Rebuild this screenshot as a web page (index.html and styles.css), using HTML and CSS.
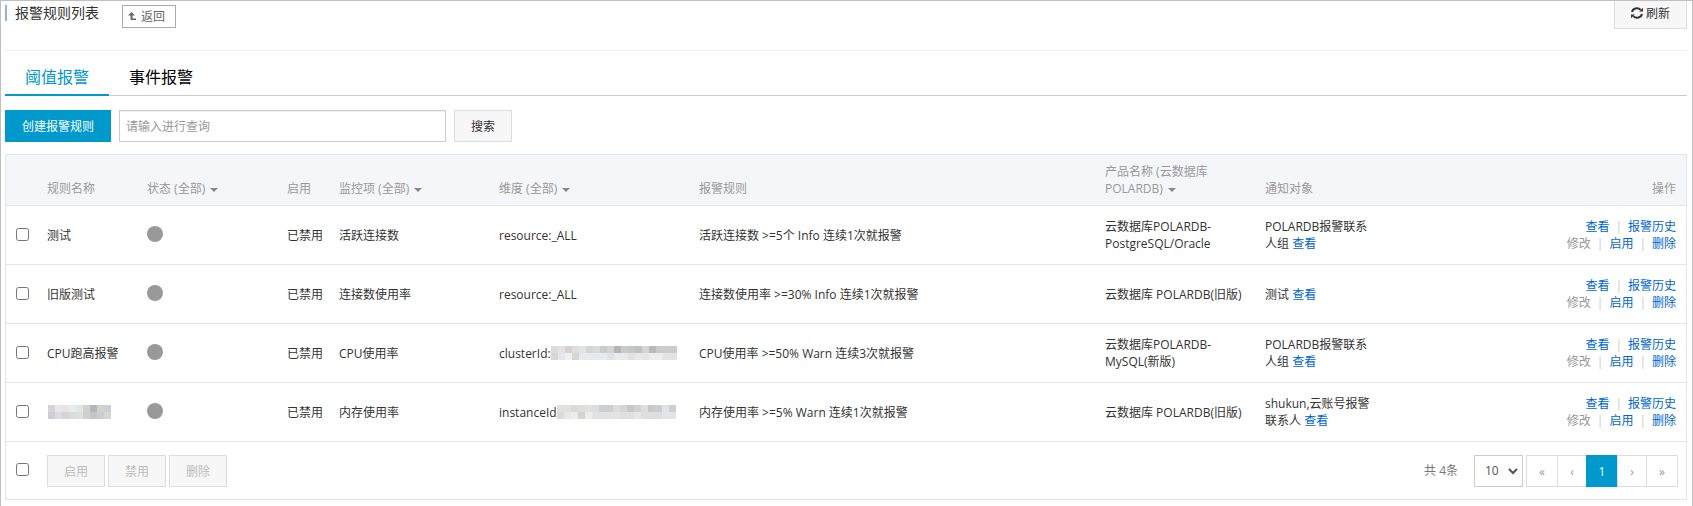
FILE: index.html
```
<!DOCTYPE html>
<html lang="zh-CN">
<head>
    <meta charset="UTF-8">
    <title>报警规则列表</title>
    <link rel="stylesheet" href="styles.css">
</head>
<body>
    <div class="page">
        <div class="header">
            <h1 class="title">报警规则列表</h1>
            <button type="button" class="btn-back">
                <svg width="8" height="8" viewBox="0 0 8 8"><path d="M3.5 0L7 3.6H4.6V6.6H8V8H2.6V3.6H0Z" fill="#666"/></svg>
                返回
            </button>
            <button type="button" class="btn-refresh">
                <svg width="12" height="12" viewBox="0 0 12 12" fill="none" stroke="#333" stroke-width="2">
                    <path d="M1 5A5 4.4 0 0 1 9.6 2.8M11 7A5 4.4 0 0 1 2.4 9.2"/>
                    <path d="M12 0.8V4.6H8.2ZM0 11.2V7.4H3.8Z" fill="#333" stroke="none"/>
                </svg>
                刷新
            </button>
        </div>

        <ul class="tabs">
            <li class="active"><a href="#">阈值报警</a></li>
            <li><a href="#">事件报警</a></li>
        </ul>

        <div class="toolbar">
            <button type="button" class="btn btn-primary">创建报警规则</button>
            <input type="text" class="search" placeholder="请输入进行查询" aria-label="查询">
            <button type="button" class="btn">搜索</button>
        </div>

        <table class="rules">
            <colgroup>
                <col class="col-check">
                <col class="col-name">
                <col class="col-state">
                <col class="col-enable">
                <col class="col-metric">
                <col class="col-dim">
                <col>
                <col class="col-product">
                <col class="col-notify">
                <col class="col-ops">
            </colgroup>
            <thead>
                <tr>
                    <th></th>
                    <th>规则名称</th>
                    <th>状态 (全部) <span class="caret"></span></th>
                    <th>启用</th>
                    <th>监控项 (全部) <span class="caret"></span></th>
                    <th>维度 (全部) <span class="caret"></span></th>
                    <th>报警规则</th>
                    <th>产品名称 (云数据库 POLARDB) <span class="caret"></span></th>
                    <th>通知对象</th>
                    <th class="ops">操作</th>
                </tr>
            </thead>
            <tbody>
                <tr>
                    <td><input type="checkbox" aria-label="选择"></td>
                    <td>测试</td>
                    <td><span class="dot"></span></td>
                    <td>已禁用</td>
                    <td>活跃连接数</td>
                    <td>resource:_ALL</td>
                    <td>活跃连接数 &gt;=5个 Info 连续1次就报警</td>
                    <td>云数据库POLARDB-PostgreSQL/Oracle</td>
                    <td>POLARDB报警联系人组 <a href="#">查看</a></td>
                    <td class="ops">
                        <a href="#">查看</a><i>|</i><a href="#">报警历史</a><br>
                        <span class="off">修改</span><i>|</i><a href="#">启用</a><i>|</i><a href="#">删除</a>
                    </td>
                </tr>
                <tr>
                    <td><input type="checkbox" aria-label="选择"></td>
                    <td>旧版测试</td>
                    <td><span class="dot"></span></td>
                    <td>已禁用</td>
                    <td>连接数使用率</td>
                    <td>resource:_ALL</td>
                    <td>连接数使用率 &gt;=30% Info 连续1次就报警</td>
                    <td>云数据库 POLARDB(旧版)</td>
                    <td>测试 <a href="#">查看</a></td>
                    <td class="ops">
                        <a href="#">查看</a><i>|</i><a href="#">报警历史</a><br>
                        <span class="off">修改</span><i>|</i><a href="#">启用</a><i>|</i><a href="#">删除</a>
                    </td>
                </tr>
                <tr>
                    <td><input type="checkbox" aria-label="选择"></td>
                    <td>CPU跑高报警</td>
                    <td><span class="dot"></span></td>
                    <td>已禁用</td>
                    <td>CPU使用率</td>
                    <td><div class="masked">clusterId:<span class="mask mask-cluster"></span></div></td>
                    <td>CPU使用率 &gt;=50% Warn 连续3次就报警</td>
                    <td>云数据库POLARDB-MySQL(新版)</td>
                    <td>POLARDB报警联系人组 <a href="#">查看</a></td>
                    <td class="ops">
                        <a href="#">查看</a><i>|</i><a href="#">报警历史</a><br>
                        <span class="off">修改</span><i>|</i><a href="#">启用</a><i>|</i><a href="#">删除</a>
                    </td>
                </tr>
                <tr>
                    <td><input type="checkbox" aria-label="选择"></td>
                    <td><div class="masked"><span class="mask mask-name"></span></div></td>
                    <td><span class="dot"></span></td>
                    <td>已禁用</td>
                    <td>内存使用率</td>
                    <td><div class="masked">instanceId<span class="mask mask-instance"></span></div></td>
                    <td>内存使用率 &gt;=5% Warn 连续1次就报警</td>
                    <td>云数据库 POLARDB(旧版)</td>
                    <td>shukun,云账号报警联系人 <a href="#">查看</a></td>
                    <td class="ops">
                        <a href="#">查看</a><i>|</i><a href="#">报警历史</a><br>
                        <span class="off">修改</span><i>|</i><a href="#">启用</a><i>|</i><a href="#">删除</a>
                    </td>
                </tr>
            </tbody>
            <tfoot>
                <tr>
                    <td><input type="checkbox" aria-label="全选"></td>
                    <td colspan="9">
                        <div class="footer">
                            <button type="button" class="btn" disabled>启用</button>
                            <button type="button" class="btn" disabled>禁用</button>
                            <button type="button" class="btn" disabled>删除</button>
                            <span class="total">共 4条</span>
                            <div class="size">
                                <select aria-label="每页条数">
                                    <option>10</option>
                                    <option>20</option>
                                    <option>50</option>
                                </select>
                                <svg width="10" height="7" viewBox="0 0 10 7"><path d="M1 1L5 5L9 1" fill="none" stroke="#555" stroke-width="2"/></svg>
                            </div>
                            <ul class="pager">
                                <li><a href="#">«</a></li>
                                <li class="step"><a href="#">‹</a></li>
                                <li class="active"><a href="#">1</a></li>
                                <li class="step"><a href="#">›</a></li>
                                <li><a href="#">»</a></li>
                            </ul>
                        </div>
                    </td>
                </tr>
            </tfoot>
        </table>
    </div>
</body>
</html>
```
FILE: styles.css
```
*{box-sizing:border-box;}
body,h1,ul{margin:0;padding:0;}
ul{list-style:none;}
a{color:#06c;text-decoration:none;}
i{font-style:normal;}
body,button,input,select{
    font-family:"Open Sans","Noto Sans CJK SC",sans-serif;
    font-size:12px;
    color:#333;
}
body{
    line-height:17px;
    background-color:#fff;
}
.page{
    min-height:100vh;
    padding:0 5px 6px 4px;
    border:1px solid #c0c0c0;
}

/* 头部 */
.header{
    display:flex;
    align-items:flex-start;
    height:50px;
    border-bottom:1px solid #eee;
}
.title{
    margin-top:4px;
    padding-left:8px;
    border-left:2px solid #88b7e0;
    font-size:14px;
    font-weight:normal;
    line-height:16px;
}
.btn-back{
    display:flex;
    align-items:center;
    gap:5px;
    height:23px;
    margin:4px 0 0 23px;
    padding:0 10px 2px 5px;
    border:1px solid #aaa;
    background-color:#fff;
    color:#666;
}
.btn-refresh{
    display:flex;
    align-items:center;
    gap:3px;
    height:28px;
    margin-left:auto;
    padding:0 16px 4px;
    border:1px solid #ddd;
    border-top:none;
    background-color:#f7f7f7;
}

/* 选项卡 */
.tabs{
    display:flex;
    height:45px;
    border-bottom:1px solid #ccc;
}
.tabs li{
    height:45px;
    padding:0 20px;
    font-size:16px;
    line-height:52px;
}
.tabs a{color:#000;}
.tabs .active{border-bottom:2px solid #09c;}
.tabs .active a{color:#09c;}

/* 工具栏 */
.toolbar{
    display:flex;
    gap:8px;
    padding:14px 0 12px;
}
.btn{
    height:32px;
    padding:0 16px;
    border:1px solid #ddd;
    background-color:#f7f7f7;
}
.btn-primary{
    border-color:#09c;
    background-color:#09c;
    color:#fff;
}
.btn:disabled{color:#bbb;}
.search{
    width:327px;
    height:32px;
    padding:0 6px;
    border:1px solid #ccc;
    box-shadow:inset 0 1px 1px rgba(0,0,0,.07);
}
.search::placeholder{color:#999;}

/* 规则表格 */
.rules{
    width:100%;
    border:1px solid #e1e6eb;
    border-spacing:0;
    table-layout:fixed;
}
.col-check{width:33px;}
.col-name{width:100px;}
.col-state{width:140px;}
.col-enable{width:52px;}
.col-metric,
.col-product{width:160px;}
.col-dim{width:200px;}
.col-notify{width:125px;}
.col-ops{width:304px;}
.rules th,
.rules td{
    padding:8px;
    border-bottom:1px solid #e1e6eb;
    text-align:left;
}
.rules th{
    height:51px;
    background-color:#f5f6fa;
    color:#999;
    font-weight:normal;
    vertical-align:bottom;
}
.rules td{
    height:59px;
    vertical-align:middle;
}
.rules td:first-child{padding:0 10px;}
.rules .ops{
    padding-right:10px;
    text-align:right;
}
.ops i{
    margin:0 6px;
    color:#ccc;
}
.off{color:#999;}
.caret{
    display:inline-block;
    margin-left:2px;
    border:4px solid transparent;
    border-top-color:#888;
    border-bottom:none;
    vertical-align:middle;
}
.rules input{
    display:block;
    width:13px;
    height:13px;
    margin:0 0 2px;
}
.dot{
    display:block;
    width:16px;
    height:16px;
    margin-bottom:2px;
    border-radius:50%;
    background-color:#999;
}

/* 打码 */
.masked{
    display:flex;
    align-items:center;
    white-space:nowrap;
}
.mask{
    height:14px;
    background-repeat:no-repeat;
    background-size:100% 7px;
    background-position:0 0,0 7px;
}
.mask-cluster{
    width:126px;
    background-image:
        linear-gradient(90deg,#dcdcdc 7px,#dfe3e3 0 14px,#d8d0d4 0 21px,#dedede 0 28px,#e2e3e2 0 35px,#d0d6d5 0 42px,#ddd9db 0 49px,#c6cdcf 0 56px,#d4d4d2 0 63px,#b3b5b6 0 70px,#c8cbcc 0 77px,#c4c7ca 0 84px,#bfc1c3 0 91px,#d8d4d1 0 98px,#b5babe 0 105px,#c8cbce 0 112px,#d0cacd 0),
        linear-gradient(90deg,#d7d6d9 7px,#e5e6e8 0 14px,#f2efef 0 21px,#d6d8d0 0 28px,#e8ebed 0 49px,#e6ecea 0 56px,#dfe4e3 0 63px,#e8ebed 0 77px,#e2e2e4 0 84px,#eae8e7 0 91px,#e2e5ea 0 98px,#efedea 0 112px,#e3e2e4 0);
}
.mask-instance{
    width:119px;
    background-image:
        linear-gradient(90deg,#e0e1e0 14px,#dadbd4 0 21px,#dfdedf 0 28px,#e6e0da 0 35px,#d5dfe5 0 42px,#cecfd2 0 56px,#e0ddd8 0 63px,#d0d6da 0 70px,#c8c9c6 0 77px,#d0d2d4 0 84px,#e0dddd 0 91px,#c9c9c7 0 98px,#ccccd2 0 105px,#e1e2e2 0 112px,#cfcfcf 0),
        linear-gradient(90deg,#d9dbd5 7px,#e7e9e8 0 14px,#ececea 0 21px,#d3d5ce 0 28px,#ecece7 0 35px,#dfe2e7 0 42px,#e2e2e2 0 56px,#e7e1df 0 63px,#dfdfe3 0 77px,#e7e6e3 0 84px,#dcdedf 0 105px,#e2e4e8 0);
}
.mask-name{
    width:63px;
    margin-left:1px;
    background-image:
        linear-gradient(90deg,#d7d2d9 7px,#e8e8ea 0 14px,#e4e4e4 0 21px,#ebebed 0 28px,#e3e5e2 0 35px,#cfd1d2 0 42px,#b5b5b7 0 49px,#d3d1cc 0 56px,#cad0d4 0),
        linear-gradient(90deg,#cfced6 7px,#dfdae0 0 14px,#d5d3d5 0 21px,#dbdddd 0 28px,#d9e2e2 0 35px,#cfd0cb 0 42px,#c4c6c9 0 49px,#cfcdca 0 56px,#d5d7d7 0);
}

/* 表格底部 */
.rules tfoot td{
    height:57px;
    border-bottom:none;
}
.footer{
    display:flex;
    align-items:center;
    gap:3px;
}
.total{
    margin-left:auto;
    margin-right:13px;
    color:#777;
}
.size{position:relative;}
.size select{
    display:block;
    width:49px;
    height:32px;
    padding:0 10px;
    border:1px solid #ccc;
    border-radius:0;
    background-color:#fff;
    color:#555;
    appearance:none;
}
.size svg{
    position:absolute;
    top:13px;
    right:5px;
    pointer-events:none;
}
.pager{display:flex;}
.pager a{
    display:block;
    width:32px;
    height:32px;
    margin-left:-1px;
    border:1px solid #ddd;
    color:#999;
    line-height:32px;
    text-align:center;
}
.pager .step a{width:30px;}
.pager li:first-child a{margin-left:0;}
.pager .active a{
    border-color:#09c;
    background-color:#09c;
    color:#fff;
}
```
